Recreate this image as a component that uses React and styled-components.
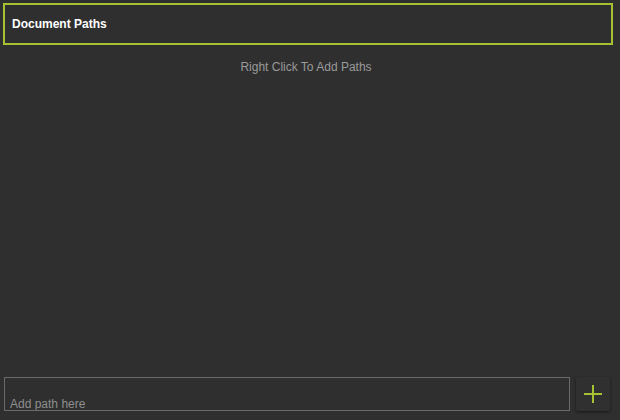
import React from 'react';
import styled, { createGlobalStyle } from 'styled-components';

const GlobalStyle = createGlobalStyle`
  html, body {
    margin: 0;
    padding: 0;
    background: #2f2f2f;
  }
  #root {
    height: 100vh;
  }
`;

const Panel = styled.div`
  display: flex;
  flex-direction: column;
  height: 100%;
  box-sizing: border-box;
  background: #2f2f2f;
  font-family: "Liberation Sans", Arial, sans-serif;
`;

const Header = styled.div`
  display: flex;
  align-items: center;
  margin: 3px 7px 0 3px;
  height: 42px;
  box-sizing: border-box;
  border: 2px solid #a6c232;
  padding-left: 7px;
  color: #ffffff;
  font-size: 12px;
  font-weight: bold;
`;

const Hint = styled.div`
  margin-top: 15px;
  text-align: center;
  color: #9a9a9a;
  font-size: 12px;
  padding-right: 8px;
`;

const Spacer = styled.div`
  flex: 1;
`;

const InputRow = styled.div`
  display: flex;
  align-items: stretch;
  gap: 6px;
  margin: 0 10px 9px 4px;
  height: 34px;
`;

const PathInput = styled.input`
  flex: 1;
  min-width: 0;
  box-sizing: border-box;
  height: 34px;
  margin: 0;
  background: #2f2f2f;
  border: 1px solid #6a6a6a;
  color: #dddddd;
  font-family: "Liberation Sans", Arial, sans-serif;
  font-size: 12px;
  line-height: 14px;
  padding: 19px 5px 0 5px;
  outline: none;

  &::placeholder {
    color: #8e8e8e;
  }
`;

const AddButton = styled.button`
  width: 34px;
  height: 34px;
  padding: 0;
  display: flex;
  align-items: center;
  justify-content: center;
  background: #303030;
  border: none;
  border-radius: 2px;
  box-shadow: 0 1px 3px rgba(0, 0, 0, 0.55);
  cursor: pointer;
`;

const PlusIcon = () => (
  <svg width="20" height="20" viewBox="0 0 20 20">
    <path d="M10 1V19M1 10H19" stroke="#a6c232" strokeWidth="2" />
  </svg>
);

const App = () => (
  <>
    <GlobalStyle />
    <Panel>
      <Header>Document Paths</Header>
      <Hint>Right Click To Add Paths</Hint>
      <Spacer />
      <InputRow>
        <PathInput placeholder="Add path here" />
        <AddButton>
          <PlusIcon />
        </AddButton>
      </InputRow>
    </Panel>
  </>
);

export default App;
